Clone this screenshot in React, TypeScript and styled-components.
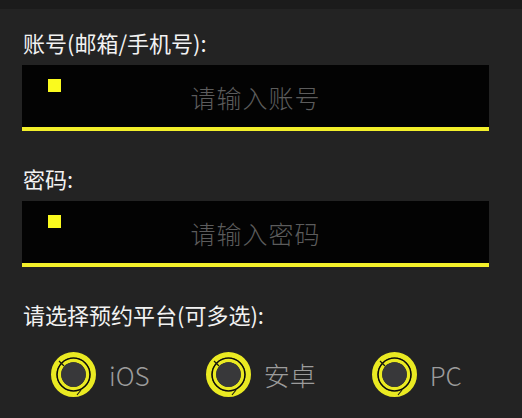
import React from 'react';
import styled, { createGlobalStyle } from 'styled-components';

const GlobalStyle = createGlobalStyle`
  html, body {
    margin: 0;
    padding: 0;
    background-color: #232323;
  }
  body {
    font-family: "Noto Sans CJK SC", "Noto Sans", sans-serif;
  }
`;

const Page = styled.div`
  width: 522px;
  height: 418px;
  overflow: hidden;
  background-color: #232323;
`;

const TopBar = styled.div`
  height: 9px;
  background-color: #1b1b1b;
`;

const Form = styled.div`
  display: flex;
  flex-direction: column;
  padding: 0 33px 0 22px;
`;

const Label = styled.div<{ $top: number }>`
  margin-top: ${(p) => p.$top}px;
  height: 28px;
  line-height: 28px;
  font-size: 22px;
  color: #f2f2f2;
  padding-left: 1px;
  margin-bottom: 9px;
`;

const Field = styled.div`
  position: relative;
  height: 62px;
  background-color: #030303;
  border-bottom: 4px solid #f2ef2a;
  display: flex;
  align-items: center;
  justify-content: center;
`;

const Marker = styled.span`
  position: absolute;
  left: 26px;
  top: 14px;
  width: 13px;
  height: 13px;
  background-color: #fafa1e;
`;

const Placeholder = styled.span`
  font-size: 25px;
  font-weight: 300;
  color: #5c5c5c;
  letter-spacing: 1px;
  padding-top: 2px;
`;

const Options = styled.div`
  display: flex;
  align-items: center;
  gap: 56px;
  padding-left: 29px;
  margin-top: 15px;
`;

const Option = styled.div`
  display: flex;
  align-items: center;
  gap: 13px;
`;

const OptionText = styled.span`
  font-size: 26px;
  font-weight: 300;
  color: #9c9c9c;
  line-height: 44px;
`;

const Radio = () => (
  <svg width="45" height="45" viewBox="0 0 45 45">
    <circle cx="22.5" cy="22.5" r="19.8" fill="none" stroke="#eaea22" strokeWidth="5.4" />
    <circle cx="22.5" cy="22.5" r="16.3" fill="none" stroke="#0c0c08" strokeWidth="1.6" />
    <circle cx="22.5" cy="22.5" r="14" fill="none" stroke="#eaea22" strokeWidth="3.4" />
    <circle cx="22.5" cy="22.5" r="12.3" fill="#38383a" />
    <line x1="8" y1="9" x2="13" y2="14" stroke="#1a1a10" strokeWidth="1.2" />
    <line x1="30" y1="38" x2="26" y2="43" stroke="#1a1a10" strokeWidth="1.2" />
  </svg>
);

const InputField = ({ placeholder }: { placeholder: string }) => (
  <Field>
    <Marker />
    <Placeholder>{placeholder}</Placeholder>
  </Field>
);

const platforms = ['iOS', '安卓', 'PC'];

const App = () => (
  <Page>
    <GlobalStyle />
    <TopBar />
    <Form>
      <Label $top={19}>账号(邮箱/手机号):</Label>
      <InputField placeholder="请输入账号" />
      <Label $top={33}>密码:</Label>
      <InputField placeholder="请输入密码" />
      <Label $top={33}>请选择预约平台(可多选):</Label>
      <Options>
        {platforms.map((name) => (
          <Option key={name}>
            <Radio />
            <OptionText>{name}</OptionText>
          </Option>
        ))}
      </Options>
    </Form>
  </Page>
);

export default App;
